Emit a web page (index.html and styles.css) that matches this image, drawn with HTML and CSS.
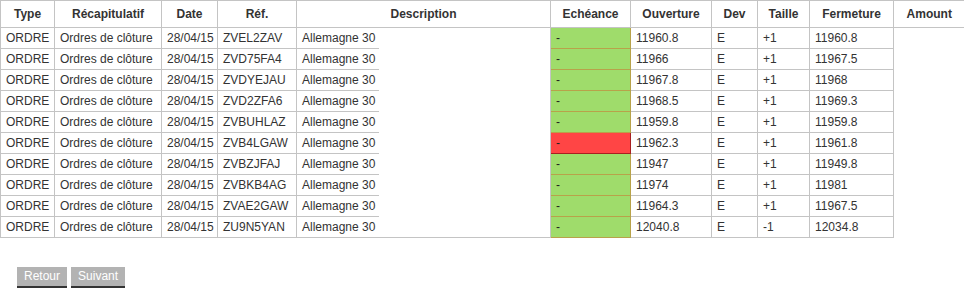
FILE: index.html
```html
<!DOCTYPE html>
<html lang="fr">
<head>
<meta charset="utf-8">
<title>Ordres</title>
<link rel="stylesheet" href="styles.css">
</head>
<body>
<table class="grid">
  <colgroup>
    <col class="c-type"><col class="c-recap"><col class="c-date"><col class="c-ref">
    <col class="c-desc"><col class="c-desc2"><col class="c-ech"><col class="c-ouv">
    <col class="c-dev"><col class="c-taille"><col class="c-ferm"><col class="c-amount">
  </colgroup>
  <thead>
    <tr>
      <th>Type</th><th>Récapitulatif</th><th>Date</th><th>Réf.</th>
      <th colspan="2">Description</th><th>Echéance</th><th>Ouverture</th>
      <th>Dev</th><th>Taille</th><th>Fermeture</th><th class="amount-h">Amount</th>
    </tr>
  </thead>
  <tbody>
    <tr><td>ORDRE</td><td>Ordres de clôture</td><td>28/04/15</td><td>ZVEL2ZAV</td><td class="desc">Allemagne 30</td><td class="blank"></td><td class="ok">-</td><td>11960.8</td><td>E</td><td>+1</td><td>11960.8</td><td class="amt"></td></tr>
    <tr><td>ORDRE</td><td>Ordres de clôture</td><td>28/04/15</td><td>ZVD75FA4</td><td class="desc">Allemagne 30</td><td class="blank"></td><td class="ok">-</td><td>11966</td><td>E</td><td>+1</td><td>11967.5</td><td class="amt"></td></tr>
    <tr><td>ORDRE</td><td>Ordres de clôture</td><td>28/04/15</td><td>ZVDYEJAU</td><td class="desc">Allemagne 30</td><td class="blank"></td><td class="ok">-</td><td>11967.8</td><td>E</td><td>+1</td><td>11968</td><td class="amt"></td></tr>
    <tr><td>ORDRE</td><td>Ordres de clôture</td><td>28/04/15</td><td>ZVD2ZFA6</td><td class="desc">Allemagne 30</td><td class="blank"></td><td class="ok">-</td><td>11968.5</td><td>E</td><td>+1</td><td>11969.3</td><td class="amt"></td></tr>
    <tr><td>ORDRE</td><td>Ordres de clôture</td><td>28/04/15</td><td>ZVBUHLAZ</td><td class="desc">Allemagne 30</td><td class="blank"></td><td class="ok">-</td><td>11959.8</td><td>E</td><td>+1</td><td>11959.8</td><td class="amt"></td></tr>
    <tr><td>ORDRE</td><td>Ordres de clôture</td><td>28/04/15</td><td>ZVB4LGAW</td><td class="desc">Allemagne 30</td><td class="blank"></td><td class="ko">-</td><td>11962.3</td><td>E</td><td>+1</td><td>11961.8</td><td class="amt"></td></tr>
    <tr><td>ORDRE</td><td>Ordres de clôture</td><td>28/04/15</td><td>ZVBZJFAJ</td><td class="desc">Allemagne 30</td><td class="blank"></td><td class="ok">-</td><td>11947</td><td>E</td><td>+1</td><td>11949.8</td><td class="amt"></td></tr>
    <tr><td>ORDRE</td><td>Ordres de clôture</td><td>28/04/15</td><td>ZVBKB4AG</td><td class="desc">Allemagne 30</td><td class="blank"></td><td class="ok">-</td><td>11974</td><td>E</td><td>+1</td><td>11981</td><td class="amt"></td></tr>
    <tr><td>ORDRE</td><td>Ordres de clôture</td><td>28/04/15</td><td>ZVAE2GAW</td><td class="desc">Allemagne 30</td><td class="blank"></td><td class="ok">-</td><td>11964.3</td><td>E</td><td>+1</td><td>11967.5</td><td class="amt"></td></tr>
    <tr class="last"><td>ORDRE</td><td>Ordres de clôture</td><td>28/04/15</td><td>ZU9N5YAN</td><td class="desc">Allemagne 30</td><td class="blank"></td><td class="ok">-</td><td>12040.8</td><td>E</td><td>-1</td><td>12034.8</td><td class="amt"></td></tr>
  </tbody>
</table>
<div class="pager">
  <button class="btn" type="button">Retour</button>
  <button class="btn" type="button">Suivant</button>
</div>
</body>
</html>
```
FILE: styles.css
```css
html, body {
  margin: 0;
  padding: 0;
  background: #ffffff;
}
body {
  font-family: "Liberation Sans", Arial, sans-serif;
  font-size: 12px;
  color: #333333;
}
.grid {
  border-collapse: collapse;
  table-layout: fixed;
  width: 964px;
}
.c-type { width: 54px; }
.c-recap { width: 107px; }
.c-date { width: 56px; }
.c-ref { width: 79px; }
.c-desc { width: 82px; }
.c-desc2 { width: 172px; }
.c-ech { width: 80px; }
.c-ouv { width: 81px; }
.c-dev { width: 46px; }
.c-taille { width: 52px; }
.c-ferm { width: 84px; }
.c-amount { width: 71px; }

.grid th {
  font-weight: bold;
  text-align: center;
  line-height: 26px;
  padding: 0 4px;
  border: 1px solid #c4c4c4;
  vertical-align: middle;
  white-space: nowrap;
}
.grid th.amount-h { border-right: none; }
.grid td {
  line-height: 20px;
  padding: 0 0 0 5px;
  border: 1px solid #c4c4c4;
  white-space: nowrap;
  overflow: hidden;
}
.grid td.desc {
  border-right: none;
}
.grid td.blank {
  border-top: none;
  border-bottom: none;
  border-left: none;
}
.grid tr.last td.blank {
  border-bottom: 1px solid #c4c4c4;
}
.grid td.amt {
  border-top: none;
  border-bottom: none;
  border-right: none;
}
.grid td.ok {
  background: #9fdc6b;
  border: 1px solid #b8a24a;
  color: #222;
}
.grid td.ko {
  background: #ff4545;
  border: 1px solid #a82020;
  color: #222;
}
.pager {
  display: flex;
  gap: 4px;
  padding: 29px 0 0 17px;
}
.btn {
  font-family: "Liberation Sans", Arial, sans-serif;
  font-size: 12px;
  color: #ffffff;
  background: #b3b3b3;
  border: none;
  border-bottom: 2px solid #333333;
  padding: 0 7px;
  height: 21px;
  line-height: 19px;
  cursor: pointer;
}
```
